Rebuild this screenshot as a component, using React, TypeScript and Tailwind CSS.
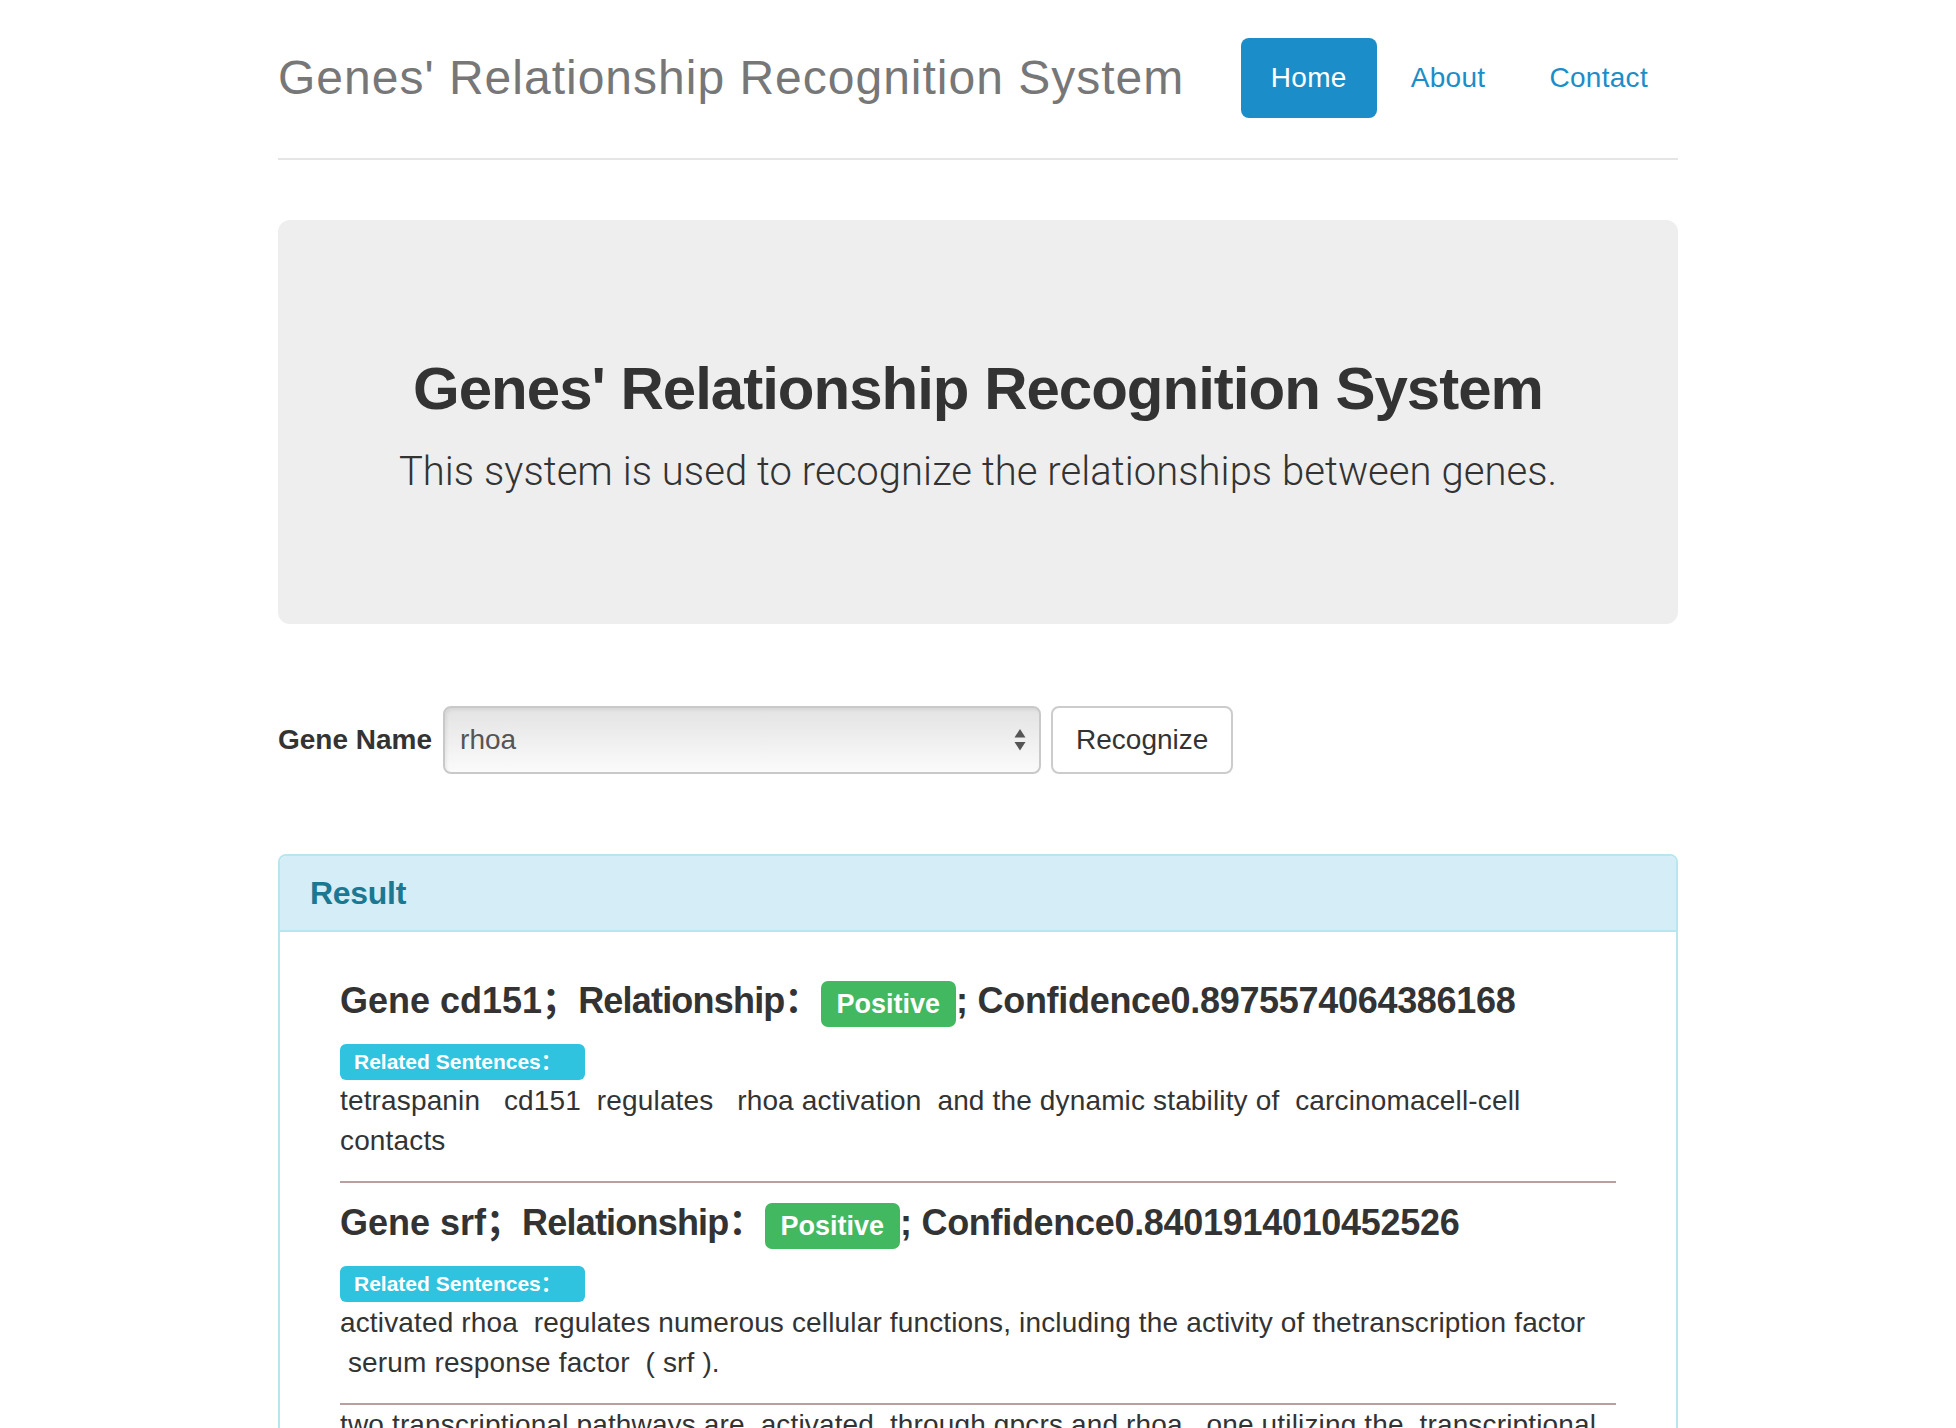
import React from "react";

function PositiveLabel() {
  return (
    <span className="rounded-[7px] bg-[#42b860] px-[16px] py-[8px] text-[27px] font-bold leading-none tracking-normal text-white">
      Positive
    </span>
  );
}

function RelatedLabel() {
  return (
    <div className="flex h-[40px] items-start pt-[3px]">
      <span className="flex h-[36px] items-center rounded-[6px] bg-[#30c3df] pl-[14px] pr-[23px] text-[21px] font-bold text-white">
        Related Sentences：
      </span>
    </div>
  );
}

function Lines({ lines }: { lines: string[] }) {
  return (
    <div className="text-[28px] leading-[40px] tracking-[0.15px] text-[#333333]">
      {lines.map((l, i) => (
        <div key={i} className="h-[40px] whitespace-pre">
          {l}
        </div>
      ))}
    </div>
  );
}

function Rule() {
  return <div className="mt-[20px] h-[2px] bg-[#b8a0a0]" />;
}

function GeneHeading({ gene, conf }: { gene: string; conf: string }) {
  return (
    <h4 className="mb-[20px] mt-[20px] whitespace-pre text-[36px] font-bold leading-[40px] text-[#333333]">
      <span>{`Gene ${gene}；`}</span>
      <span className="tracking-[-0.8px]">Relationship</span>
      <span>：</span>
      <PositiveLabel />
      <span className="tracking-[-0.3px]">{`; Confidence${conf}`}</span>
    </h4>
  );
}

export default function App() {
  return (
    <div className="h-screen overflow-hidden bg-white font-['Liberation_Sans','Noto_Sans_CJK_SC',sans-serif] text-[#333333]">
      <div className="mx-auto w-[1400px] pt-[38px]">
        <header className="flex items-start justify-between border-b-2 border-[#e5e5e5] pb-[40px]">
          <h3 className="text-[48px] leading-[80px] tracking-[1px] text-[#777777]">
            Genes' Relationship Recognition System
          </h3>
          <nav className="flex gap-[4px] text-[28px] tracking-[0.3px]">
            <a className="block h-[80px] rounded-[8px] bg-[#1b8ec9] px-[30px] leading-[80px] text-white">
              Home
            </a>
            <a className="block h-[80px] rounded-[8px] px-[30px] leading-[80px] text-[#1b8ec9]">
              About
            </a>
            <a className="block h-[80px] rounded-[8px] px-[30px] leading-[80px] text-[#1b8ec9]">
              Contact
            </a>
          </nav>
        </header>

        <section className="mt-[60px] rounded-[12px] bg-[#eeeeee] px-[60px] py-[96px] text-center">
          <h1 className="mb-[20px] mt-[40px] text-[60px] font-bold leading-[66px] tracking-[-1px] text-[#333333]">
            Genes' Relationship Recognition System
          </h1>
          <p className="mb-[26px] font-['Roboto',sans-serif] text-[40px] font-light leading-[60px] tracking-[0.05px] text-[#333333]">
            This system is used to recognize the relationships between genes.
          </p>
        </section>

        <form className="mt-[82px] flex h-[68px] items-center">
          <label className="mr-[11px] text-[28px] font-bold text-[#333333]">Gene Name</label>
          <div className="flex h-[68px] w-[598px] items-center justify-between rounded-[8px] border-2 border-[#c9c9c9] bg-linear-to-b from-[#e3e3e3] to-[#fbfbfb] pl-[15px] pr-[13px] text-[28px] text-[#555555] shadow-[inset_2px_2px_3px_rgba(0,0,0,0.06)]">
            <span>rhoa</span>
            <svg width="12" height="24" viewBox="0 0 12 24">
              <polygon points="6,1 11.5,9.5 0.5,9.5" fill="#555555" />
              <polygon points="0.5,14 11.5,14 6,22.5" fill="#555555" />
            </svg>
          </div>
          <button
            type="button"
            className="ml-[10px] h-[68px] rounded-[8px] border-2 border-[#cccccc] bg-white px-[23px] text-[28px] text-[#333333]"
          >
            Recognize
          </button>
        </form>

        <div className="mt-[80px] rounded-[8px] border-2 border-[#b7e6ef]">
          <div className="rounded-t-[6px] border-b-2 border-[#b7e6ef] bg-[#d5edf6] px-[30px] py-[19px] text-[32px] font-bold leading-[36px] tracking-[-0.3px] text-[#1c7891]">
            Result
          </div>
          <div className="px-[60px] pb-[30px] pt-[29px]">
            <GeneHeading gene="cd151" conf="0.8975574064386168" />
            <RelatedLabel />
            <Lines
              lines={[
                "tetraspanin   cd151  regulates   rhoa activation  and the dynamic stability of  carcinomacell-cell",
                "contacts",
              ]}
            />
            <Rule />

            <GeneHeading gene="srf" conf="0.8401914010452526" />
            <RelatedLabel />
            <Lines
              lines={[
                "activated rhoa  regulates numerous cellular functions, including the activity of thetranscription factor",
                " serum response factor  ( srf ).",
              ]}
            />
            <Rule />
            <Lines
              lines={[
                "two transcriptional pathways are  activated  through gpcrs and rhoa , one utilizing the  transcriptional",
                "coactivator  mal  and the other  ternary complex factors .",
              ]}
            />
            <Rule />
          </div>
        </div>
      </div>
    </div>
  );
}
